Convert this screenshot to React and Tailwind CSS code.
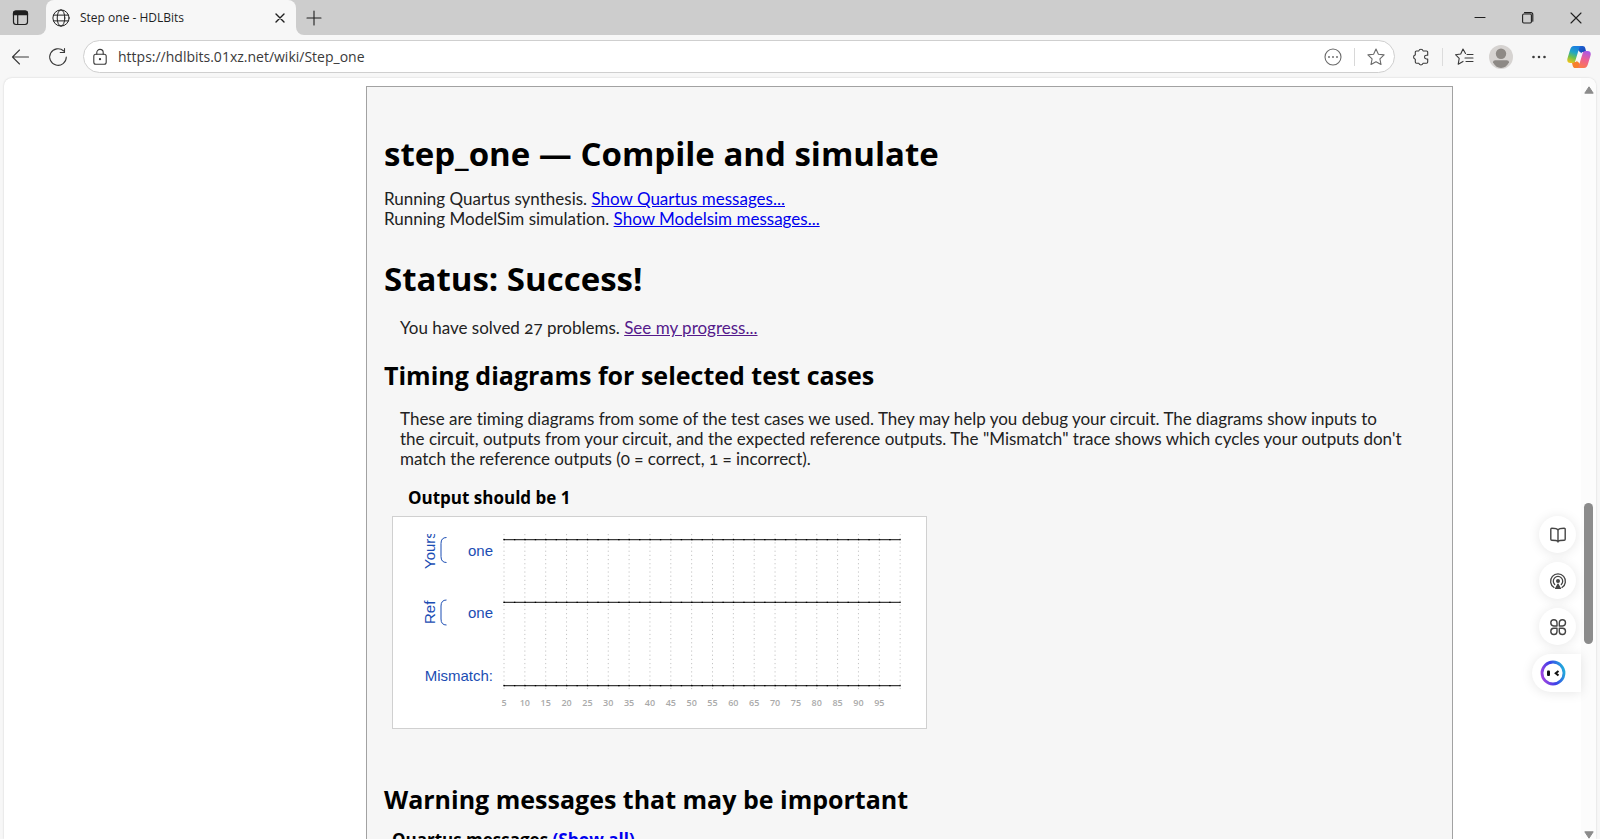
const TICKS = Array.from({ length: 20 }, (_, i) => i);
const X0 = 111;
const STEP = 20.85;

function StrokeIcon({ children, className = "size-5", label }) {
  return (
    <svg viewBox="0 0 20 20" className={className} fill="none" stroke="currentColor" strokeWidth="1.1" strokeLinecap="round" strokeLinejoin="round" aria-label={label} aria-hidden={label ? undefined : true}>
      {children}
    </svg>
  );
}

function TabStrip() {
  return (
    <div className="flex h-[35px] items-stretch bg-[#cdcdcd] text-[#1f1f1f]">
      <div className="flex w-[46px] bg-[#f7f7f7]">
        <button type="button" aria-label="Tab actions" className="flex flex-1 items-center justify-center rounded-br-lg bg-[#cdcdcd] pr-1">
          <svg viewBox="0 0 20 20" className="size-5" fill="none" stroke="currentColor" strokeWidth="1.2">
            <rect x="2.500" y="3" width="14" height="13.500" rx="2.400" />
            <path d="M2.500 6.600V5.400A2.400 2.400 0 0 1 4.900 3h9.200a2.400 2.400 0 0 1 2.400 2.400v1.200z" fill="currentColor" />
            <path d="M6.700 6.600v9.900" />
          </svg>
        </button>
      </div>
      <div className="flex w-[250px] bg-[#cdcdcd]">
        <div className="flex flex-1 items-center rounded-t-lg bg-[#f7f7f7] px-1.5">
          <StrokeIcon className="size-[18px]">
            <circle cx="10" cy="10" r="9" />
            <ellipse cx="10" cy="10" rx="4.2" ry="9" />
            <path d="M1.8 6.8h16.4M1.8 13.2h16.4" />
          </StrokeIcon>
          <span className="ml-2.5 flex-1 text-xs">Step one - HDLBits</span>
          <button type="button" aria-label="Close tab" className="flex size-5 items-center justify-center">
            <StrokeIcon className="size-5"><path d="M6 6l8 8M14 6l-8 8" strokeWidth="1.4" /></StrokeIcon>
          </button>
        </div>
      </div>
      <div className="flex flex-1 bg-[#f7f7f7]">
        <div className="flex flex-1 items-center rounded-bl-lg bg-[#cdcdcd] pl-2">
          <button type="button" aria-label="New tab" className="size-5">
            <StrokeIcon><path d="M10 3v14M3 10h14" /></StrokeIcon>
          </button>
          <div className="ml-auto flex">
            <button type="button" aria-label="Minimize" className="flex w-12 justify-center">
              <StrokeIcon><path d="M5 9.5h10" /></StrokeIcon>
            </button>
            <button type="button" aria-label="Restore" className="flex w-12 justify-center">
              <StrokeIcon>
                <rect x="4.6" y="6" width="8.8" height="9" rx="1.2" />
                <path d="M6.5 4.6h6.3a2 2 0 0 1 2 2v6.6" />
              </StrokeIcon>
            </button>
            <button type="button" aria-label="Close" className="flex w-12 justify-center">
              <StrokeIcon><path d="M5 5l10 10M15 5L5 15" /></StrokeIcon>
            </button>
          </div>
        </div>
      </div>
    </div>
  );
}

function CopilotLogo() {
  return (
    <svg viewBox="0 0 24 24" className="size-6">
      <defs>
        <linearGradient id="cpA" x1="0.5" y1="0" x2="0.2" y2="1">
          <stop offset="0" stopColor="#1b7fe0" />
          <stop offset="0.35" stopColor="#1fa6c4" />
          <stop offset="0.65" stopColor="#6fc04a" />
          <stop offset="1" stopColor="#f5c518" />
        </linearGradient>
        <linearGradient id="cpB" x1="0.7" y1="0" x2="0.4" y2="1">
          <stop offset="0" stopColor="#a958e8" />
          <stop offset="0.5" stopColor="#ec5f93" />
          <stop offset="1" stopColor="#fb7a4e" />
        </linearGradient>
        <linearGradient id="cpC" x1="0" y1="0" x2="1" y2="1">
          <stop offset="0" stopColor="#1f6fe0" />
          <stop offset="1" stopColor="#173fae" />
        </linearGradient>
      </defs>
      <path d="M7 1h8.600c1.500 0 2.300.9 2.700 2.300L19.200 7h-2.900c-1.200 0-1.900.5-2.400 1.600L12 6z" fill="url(#cpC)" />
      <path d="M17 23H8.400c-1.500 0-2.300-.9-2.700-2.300L4.800 17h2.900c1.200 0 1.900-.5 2.400-1.600L12 18z" fill="#f7802c" />
      <path d="M13.600 1H7C4.900 1 3.800 2.600 3.100 4.800L.6 13C-.3 16.200.6 18 3.400 18h2.200c1.700 0 2.400-1 2.900-2.700l2.800-9.300C12 3.600 12.300 2 13.600 1z" fill="url(#cpA)" />
      <path d="M10.400 23H17c2.100 0 3.200-1.600 3.900-3.800l2.500-8.200c.9-3.200 0-5-2.800-5h-2.200c-1.700 0-2.400 1-2.900 2.700L12.700 18c-.7 2.400-1 4-2.300 5z" fill="url(#cpB)" />
      <path d="M12.200 7.500h1.900l-2.300 9H9.900z" fill="#f7f7f7" />
    </svg>
  );
}

function Toolbar() {
  return (
    <div className="flex h-[43px] items-center bg-[#f7f7f7] pr-[9px] pl-2.5 text-[#3a3a3a]">
      <button type="button" aria-label="Back" className="size-5">
        <StrokeIcon><path d="M18.500 10H2.500M9.500 3L2.500 10l7 7" /></StrokeIcon>
      </button>
      <button type="button" aria-label="Refresh" className="ml-[18px] size-5">
        <StrokeIcon><path d="M18.300 10a8.300 8.300 0 1 1-2.600-6M16.500 1.500v4h-4.300" /></StrokeIcon>
      </button>
      <div className="ml-[15px] flex h-[33px] flex-1 items-center rounded-full border border-[#cfcfcf] bg-white pr-2 pl-1.5">
        <StrokeIcon label="Secure site">
          <rect x="3.800" y="7.200" width="12.400" height="10" rx="2" />
          <path d="M6.800 7.200V5.600a3.200 3.200 0 0 1 6.400 0v1.600" />
          <circle cx="10" cy="12.200" r=".6" fill="currentColor" />
        </StrokeIcon>
        <input aria-label="Address" defaultValue="https://hdlbits.01xz.net/wiki/Step_one" className="ml-2 min-w-0 flex-1 bg-transparent text-sm outline-none" />
        <button type="button" aria-label="Page options" className="size-5 text-[#6a6a6a]">
          <StrokeIcon>
            <circle cx="10" cy="10" r="8" />
            <path d="M6 10h.01M10 10h.01M14 10h.01" strokeWidth="1.900" />
          </StrokeIcon>
        </button>
        <span className="mx-[11px] h-[18px] w-px bg-[#d8d8d8]" />
        <button type="button" aria-label="Favorite this page" className="size-5 text-[#6a6a6a]">
          <StrokeIcon><path d="M10 2l2.400 5.200 5.700.7-4.200 3.900 1.100 5.700L10 14.700l-5 2.800 1.100-5.700L1.900 7.900l5.700-.7z" /></StrokeIcon>
        </button>
      </div>
      <button type="button" aria-label="Extensions" className="ml-4 size-5">
        <StrokeIcon><path d="M7.800 4a2.200 2.200 0 0 1 4.300 0h3.400a1.200 1.200 0 0 1 1.200 1.200v3h-1.300a1.900 1.900 0 0 0 0 3.800h1.300v3a1.200 1.200 0 0 1-1.200 1.200h-3.400a2.200 2.200 0 0 1-4.300 0H5.500a1.200 1.200 0 0 1-1.200-1.200v-2.800a2.200 2.200 0 0 1 0-4.300V5.200A1.200 1.200 0 0 1 5.500 4z" /></StrokeIcon>
      </button>
      <span className="mx-[11px] h-[18px] w-px bg-[#dcdcdc]" />
      <button type="button" aria-label="Favorites" className="size-5">
        <StrokeIcon>
          <path d="M11.500 6.500L9 2 6.700 7 1.500 7.700l3.700 3.700-1 5.800L9 14.400M13 7.500h6M11 11h8M12 14.500h7" />
        </StrokeIcon>
      </button>
      <button type="button" aria-label="Profile" className="ml-[15px] size-6">
        <svg viewBox="0 0 24 24" className="size-6">
          <circle cx="12" cy="12" r="12" fill="#d6d3d1" />
          <circle cx="12" cy="8.800" r="5.200" fill="#8d8985" />
          <path d="M4 17.300C4 16 5 15.300 6.200 15.300h11.600c1.200 0 2.200.7 2.200 2C18.500 20.800 15.500 23 12 23s-6.500-2.200-8-5.700z" fill="#8d8985" />
        </svg>
      </button>
      <button type="button" aria-label="Settings and more" className="ml-4 size-5">
        <StrokeIcon><path d="M4.500 10h.01M10 10h.01M15.500 10h.01" strokeWidth="2.600" /></StrokeIcon>
      </button>
      <button type="button" aria-label="Copilot" className="ml-[18px] size-6"><CopilotLogo /></button>
    </div>
  );
}

function TimingDiagram() {
  return (
    <svg viewBox="0 0 533 211" className="h-[211px] w-[533px]" role="img" aria-label="Timing diagram">
      <defs>
        <clipPath id="plot"><rect x="0" y="17" width="533" height="193" /></clipPath>
      </defs>
      {TICKS.map((i) => (
        <line key={i} x1={X0 + i * STEP} x2={X0 + i * STEP} y1="17" y2="174" stroke="#c4c4c4" strokeWidth="1" strokeDasharray="1.200 2.960" />
      ))}
      {[22.700, 85.300, 168.600].map((y) => (
        <g key={y}>
          <line x1={X0 - 0.500} x2="507.500" y1={y} y2={y} stroke="#3c3c3c" strokeWidth="1.300" />
          <line x1={X0 - 0.500} x2="507.500" y1={y} y2={y} stroke="#000" strokeWidth="1.300" strokeDasharray="1.400 9.025" />
        </g>
      ))}
      <g fill="#1b4db3" fontFamily="'Liberation Sans', Arial, sans-serif" fontSize="15">
        <g clipPath="url(#plot)">
          <text transform="translate(42 52) rotate(-90)">Yours</text>
          <text transform="translate(42 107) rotate(-90)">Ref</text>
        </g>
        <text x="100" y="39" textAnchor="end">one</text>
        <text x="100" y="101" textAnchor="end">one</text>
        <text x="100" y="164" textAnchor="end">Mismatch:</text>
      </g>
      <g fill="none" stroke="#1b4db3" strokeWidth="1">
        <path d="M53.500 20.500q-5.500 0-5.500 6v13q0 6 5.500 6" />
        <path d="M53.500 83q-5.500 0-5.500 6v13q0 6 5.500 6" />
      </g>
      <g fill="#aaaaaa" fontFamily="'Open Sans', 'Noto Sans', sans-serif" fontSize="9" fontWeight="600" textAnchor="middle">
        {TICKS.slice(0, 19).map((i) => (
          <text key={i} x={X0 + i * STEP} y="189">{(i + 1) * 5}</text>
        ))}
      </g>
    </svg>
  );
}

const h1 = "font-['Open_Sans','Noto_Sans',sans-serif] text-[33px] leading-[46px] font-bold";
const h2 = "font-['Open_Sans','Noto_Sans',sans-serif] text-[25px] leading-[34px] font-bold";
const h3 = "font-['Open_Sans','Noto_Sans',sans-serif] text-[17px] leading-6 font-bold";
const link = "text-[#0000ee] underline";

function Report() {
  return (
    <main className="mt-2 mr-32 ml-[362px] min-w-0 flex-1 overflow-hidden border border-b-0 border-[#a2a2a2] bg-[#f6f6f6] px-[17px] pt-11 font-['Lato','Liberation_Sans',sans-serif] text-[17px] leading-5 text-[#222222] [font-variant-ligatures:none]">
      <h1 className={`${h1} text-black`}>step_one — Compile and simulate</h1>
      <p className="mt-3">
        Running Quartus synthesis. <a href="#quartus" className={link}>Show Quartus messages...</a>
        <br />
        Running ModelSim simulation. <a href="#modelsim" className={link}>Show Modelsim messages...</a>
      </p>
      <h1 className={`${h1} mt-[27px] text-black`}>Status: Success!</h1>
      <p className="mt-4 ml-4 oldstyle-nums">
        You have solved 27 problems. <a href="#progress" className="text-[#551a8b] underline">See my progress...</a>
      </p>
      <h2 className={`${h2} mt-5 text-black`}>Timing diagrams for selected test cases</h2>
      <p className="mt-[17px] ml-4 oldstyle-nums">
        These are timing diagrams from some of the test cases we used. They may help you debug your circuit. The diagrams show inputs to
        <br />
        the circuit, outputs from your circuit, and the expected reference outputs. The "Mismatch" trace shows which cycles your outputs don't
        <br />
        match the reference outputs (0 = correct, 1 = incorrect).
      </p>
      <h3 className={`${h3} mt-[17px] ml-6 text-black`}>Output should be 1</h3>
      <div className="mt-1.5 ml-2 w-fit border border-[#d0d0d0] bg-white"><TimingDiagram /></div>
      <h2 className={`${h2} mt-[53px] text-black`}>Warning messages that may be important</h2>
      <h3 className={`${h3} mt-3 ml-2 text-black`}>
        Quartus messages <a href="#all" className="text-[#0000ee]">(Show all)</a>
      </h3>
    </main>
  );
}

function Scrollbar() {
  return (
    <div className="flex w-[15px] shrink-0 flex-col items-center bg-[#fcfcfc] pt-2" aria-hidden="true">
      <svg viewBox="0 0 10 8" className="h-2 w-2.5"><path d="M5 .8L9.200 7.200H.8z" fill="#8b8b8b" stroke="#8b8b8b" strokeWidth="1" strokeLinejoin="round" /></svg>
      <div className="grow-[409]" />
      <div className="w-[9px] grow-[141] rounded-full bg-[#8b8b8b]" />
      <div className="grow-[187]" />
      <svg viewBox="0 0 10 8" className="h-2 w-2.5"><path d="M5 7.200L9.200 .8H.8z" fill="#8b8b8b" stroke="#8b8b8b" strokeWidth="1" strokeLinejoin="round" /></svg>
    </div>
  );
}

const round = "mr-[5px] flex size-[37px] items-center justify-center rounded-full bg-white shadow-[0_1px_12px_rgba(0,0,0,0.10)]";

function FloatingTools() {
  return (
    <div className="absolute top-[438px] right-[15px] flex flex-col items-end gap-[9px] text-[#444444]">
      <button type="button" aria-label="Read" className={round}>
        <StrokeIcon className="size-5">
          <path d="M10 4.500v12.500M10 5C9 3.500 7.500 3.300 3.800 3.300a1 1 0 0 0-1 1v9.900a1 1 0 0 0 1 1c3.700 0 5.200.2 6.200 1.200 1-1 2.500-1.200 6.200-1.200a1 1 0 0 0 1-1V4.300a1 1 0 0 0-1-1C12.500 3.300 11 3.500 10 5z" strokeWidth="1.400" />
        </StrokeIcon>
      </button>
      <button type="button" aria-label="Listen" className={round}>
        <StrokeIcon className="size-5">
          <path d="M6 16.500a7.400 7.400 0 1 1 8 0" strokeWidth="1.300" />
          <path d="M6.700 13.500a4.700 4.700 0 1 1 6.600 0" strokeWidth="1.300" />
          <circle cx="10" cy="10" r="2" fill="currentColor" stroke="none" />
          <path d="M10 13l2.500 4.500h-5z" fill="currentColor" />
        </StrokeIcon>
      </button>
      <button type="button" aria-label="Apps" className={round}>
        <StrokeIcon className="size-5">
          <path d="M9 9H5.700A3.100 3.100 0 1 1 9 5.700zM11.300 9h3.300a3.100 3.100 0 1 0-3.300-3.300zM9 11.300H5.700A3.100 3.100 0 1 0 9 14.600zM11.300 11.300h3.300a3.100 3.100 0 1 1-3.300 3.300z" strokeWidth="1.400" />
        </StrokeIcon>
      </button>
      <button type="button" aria-label="Assistant" className="flex h-[38px] w-[49px] items-center rounded-l-full bg-white pl-2 shadow-[0_1px_12px_rgba(0,0,0,0.10)]">
        <svg viewBox="0 0 26 26" className="size-[26px]">
          <defs>
            <linearGradient id="ring" x1="0" y1="0.700" x2="1" y2="0.400">
              <stop offset="0" stopColor="#a044e0" />
              <stop offset="0.500" stopColor="#3b3fe8" />
              <stop offset="1" stopColor="#22a7dc" />
            </linearGradient>
          </defs>
          <circle cx="13" cy="13" r="11" fill="#fff" stroke="url(#ring)" strokeWidth="2.800" />
          <rect x="7" y="10.500" width="3" height="5.500" rx="1" fill="#111" />
          <path d="M18.500 11l-2.800 2.300 2.800 2.300" fill="none" stroke="#111" strokeWidth="2" />
        </svg>
      </button>
    </div>
  );
}

export default function App() {
  return (
    <div className="flex h-screen flex-col overflow-hidden bg-[#f7f7f7] font-['Open_Sans','Noto_Sans',sans-serif]">
      <TabStrip />
      <Toolbar />
      <div className="relative mx-1 flex min-h-0 flex-1 overflow-hidden rounded-t-lg bg-white shadow-[0_0_2px_rgba(0,0,0,0.18)]">
        <Report />
        <Scrollbar />
        <FloatingTools />
      </div>
    </div>
  );
}
